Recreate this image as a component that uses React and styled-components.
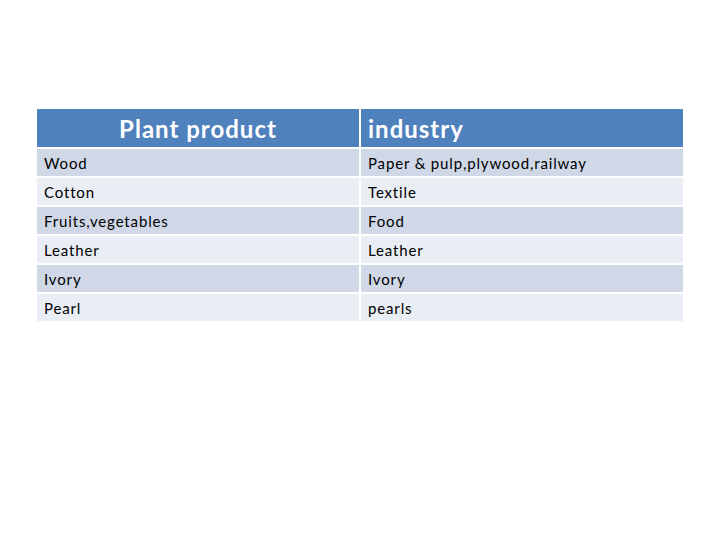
import styled, { createGlobalStyle } from 'styled-components'

const GlobalStyle = createGlobalStyle`
  body {
    margin: 0;
    background: #ffffff;
    font-family: Lato, "Open Sans", sans-serif;
  }
`

const Page = styled.div`
  width: 720px;
  height: 540px;
  padding: 109px 0 0 37px;
  box-sizing: border-box;
`

const Table = styled.div`
  display: grid;
  grid-template-columns: 322px 322px;
  grid-template-rows: 38px;
  grid-auto-rows: 27px;
  column-gap: 2px;
  row-gap: 2px;
  width: 646px;
`

const HeadCell = styled.div`
  background: #4f81bd;
  color: #ffffff;
  font-weight: 700;
  font-size: 24px;
  letter-spacing: 1px;
  display: flex;
  align-items: center;
  justify-content: ${p => (p.$center ? 'center' : 'flex-start')};
  padding-left: ${p => (p.$center ? '0' : '7px')};
  box-sizing: border-box;
`

const Cell = styled.div`
  background: ${p => (p.$odd ? '#d0d8e8' : '#e9edf4')};
  color: #000000;
  font-size: 15px;
  letter-spacing: 0.85px;
  display: flex;
  align-items: center;
  padding-left: 7px;
  padding-top: 1px;
  box-sizing: border-box;
`

const rows = [
  ['Wood', 'Paper & pulp,plywood,railway'],
  ['Cotton', 'Textile'],
  ['Fruits,vegetables', 'Food'],
  ['Leather', 'Leather'],
  ['Ivory', 'Ivory'],
  ['Pearl', 'pearls'],
]

const App = () => (
  <Page>
    <GlobalStyle />
    <Table>
      <HeadCell $center>Plant product</HeadCell>
      <HeadCell>industry</HeadCell>
      {rows.map(([a, b], i) => [
        <Cell key={`a${i}`} $odd={i % 2 === 0}>{a}</Cell>,
        <Cell key={`b${i}`} $odd={i % 2 === 0}>{b}</Cell>,
      ])}
    </Table>
  </Page>
)

export default App
